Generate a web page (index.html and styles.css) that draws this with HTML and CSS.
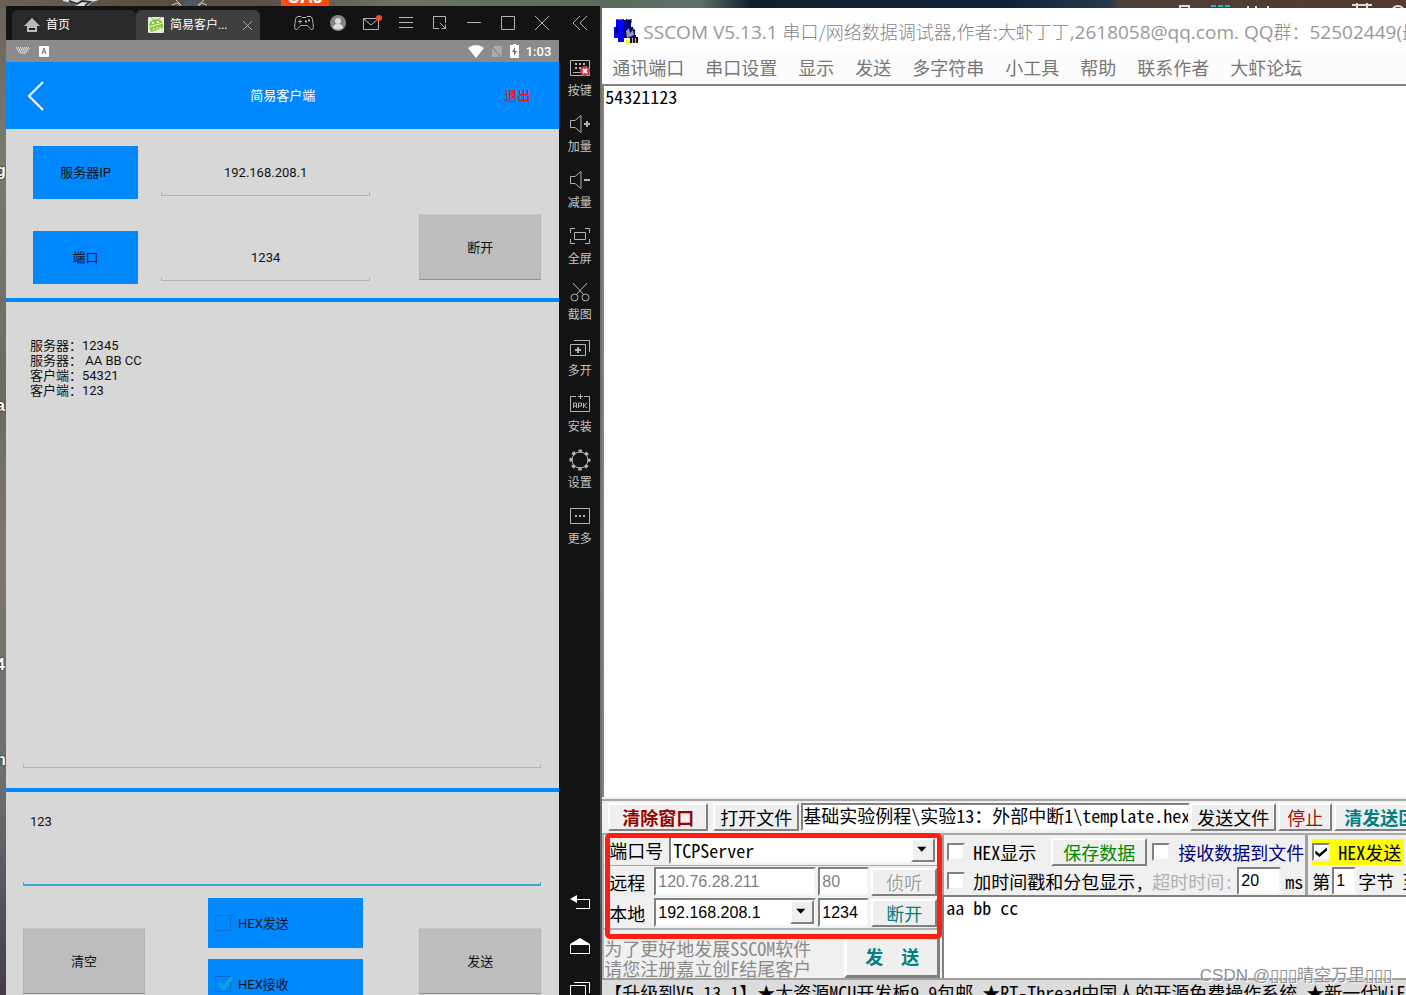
FILE: index.html
```html
<!DOCTYPE html>
<html lang="zh-CN">
<head>
<meta charset="utf-8">
<title>SSCOM V5.13.1</title>
<link rel="stylesheet" href="styles.css">
</head>
<body>
<div class="desktop">
  <div class="wallpaper">
    <svg class="wall-icon wall-a" viewBox="0 0 36 7"><path d="M0 0h36l-7 2-4 4H14L9 3 0 1z" fill="#ddd"/><path d="M6 1l8 3 5-3 8 1-5 4" stroke="#333" stroke-width="2" fill="none"/></svg>
    <svg class="wall-icon wall-b" viewBox="0 0 40 7"><path d="M12 7l3-5 6-2 5 2 4 5z" fill="#4a5a70"/><path d="M2 5l5-2 5 4M37 5l-5-2-5 4M6 0l5 5M34 0l-6 5" stroke="#ccc" fill="none"/></svg>
    <div class="wall-badge">CAJ</div>
    <svg class="wall-icon wall-c" viewBox="0 0 240 8"><path d="M6 8V6h9v2M178 5h20M183 3v5M193 3v5M219 8q5-4 10 0M74 8V6M82 8V6M94 8V6" stroke="#ddd" stroke-width="2" fill="none"/><path d="M37 6h5m2 0h5m2 0h5" stroke="#1ab4c8" stroke-width="2"/></svg>
    <span class="edge edge-g">g</span><span class="edge edge-a">a</span><span class="edge edge-4">4</span><span class="edge edge-n">n</span>
  </div>

  <section class="emulator">
    <div class="phone">
      <header class="tabbar">
        <button class="tab">
          <svg width="16" height="16" viewBox="0 0 16 16"><path d="M8 1L0 9h3v6h10V9h3z" fill="#b8b8b8"/><path d="M5 12h6" stroke="#222" stroke-width="2"/></svg>
          <span>首页</span>
        </button>
        <button class="tab tab-on">
          <svg width="16" height="16" viewBox="0 0 16 16"><rect width="16" height="16" rx="1" fill="#e4ecd8"/><path d="M1 9Q1 3 8 2q6 0 7 5v4L3 15z" fill="#8cc63f"/><path d="M3 0l3 3M13 0l-3 3" stroke="#8cc63f"/><path d="M1 10l14-4" stroke="#f4f8ec"/><circle cx="5" cy="6" r="1" fill="#fff"/><circle cx="10" cy="5" r="1" fill="#fff"/><path d="M5 12h2m1-1h2m1 0h2" stroke="#fff"/></svg>
          <span class="tab-name">简易客户...</span>
          <svg width="9" height="9" viewBox="0 0 9 9"><path d="M0 0l9 9M9 0L0 9" stroke="#aaa" fill="none"/></svg>
        </button>
        <nav class="wintools">
          <button aria-label="手柄"><svg width="20" height="16" viewBox="0 0 20 16"><path d="M4 1.500h3l1 1h4l1-1h3q2 0 2.500 3l1 8q0 2-2 2-1 0-4-4h-7q-3 4-4 4-2 0-2-2l1-8q.5-3 2.500-3zM4 6.500h4M6 4.500v4"/><path d="M11 6.500h2M14 5.500h2" stroke-width="2"/></svg></button>
          <button aria-label="账户"><svg width="16" height="16" viewBox="0 0 16 16"><circle cx="8" cy="8" r="8" fill="#858585" stroke="none"/><circle cx="8" cy="6" r="3" fill="#ddd" stroke="none"/><path d="M3 13q0-4 5-4t5 4q-5 3-10 0z" fill="#ddd" stroke="none"/></svg></button>
          <button aria-label="消息"><svg width="20" height="18" viewBox="0 0 20 18"><path d="M1.500 4.500h15v11h-15zM2 5l7 6 7-6"/><circle cx="17" cy="4" r="3" fill="#ff4632" stroke="none"/></svg></button>
          <button aria-label="菜单"><svg width="14" height="14" viewBox="0 0 14 14"><path d="M0 1.500h14M0 6.500h14M0 11.500h14"/></svg></button>
          <button aria-label="缩放"><svg width="14" height="14" viewBox="0 0 14 14"><path d="M6 12.500H.5V.5h12V7M7 7l5 5M12.500 8.500v4H8.500"/></svg></button>
          <button aria-label="最小化"><svg width="14" height="14" viewBox="0 0 14 14"><path d="M0 6.500h14"/></svg></button>
          <button aria-label="最大化"><svg width="14" height="14" viewBox="0 0 14 14"><path d="M.5.5h13v13H.5z"/></svg></button>
          <button aria-label="关闭"><svg width="14" height="14" viewBox="0 0 14 14"><path d="M0 0l14 14M14 0L0 14"/></svg></button>
        </nav>
      </header>
      <div class="status">
        <svg width="14" height="8" viewBox="0 0 14 8"><path d="M0 .5h14M1 2.500h12M2 4.500h10" stroke="#ddd" stroke-dasharray="1 1"/><path d="M0 1.500h14M1 3.500h12M3 5.500h8M4 6.500h6" stroke="#b8b8b8"/></svg>
        <svg class="status-a" width="10" height="11" viewBox="0 0 10 11"><rect width="10" height="11" rx="1" fill="#fff"/><path d="M3 8l2-6 2 6M4 6h2" stroke="#777" fill="none"/></svg>
        <svg width="16" height="13" viewBox="0 0 16 13"><path d="M8 13L0 3q8-6 16 0z" fill="#fff"/></svg>
        <svg width="12" height="13" viewBox="0 0 12 13"><path d="M3 1h8v11H1V4z" fill="#aaa"/><path d="M0 1l11 12" stroke="#777"/></svg>
        <svg class="status-bat" width="9" height="14" viewBox="0 0 9 14"><path d="M3 0h3v1h3v13H0V1h3z" fill="#fff"/><path d="M5 3L2 8h2v4l3-5H5z" fill="#777"/></svg>
        <span>1:03</span>
      </div>
      <div class="apphead">
        <button class="back" aria-label="返回"><svg width="18" height="30" viewBox="0 0 18 30"><path d="M16 1L2 15l14 14" stroke="#fff" stroke-width="2" fill="none"/></svg></button>
        <h1>简易客户端</h1>
        <button class="quit">退出</button>
      </div>
      <form class="link">
        <label class="tag" for="ip">服务器IP</label>
        <input class="line" id="ip" value="192.168.208.1">
        <label class="tag" for="port">端口</label>
        <input class="line" id="port" value="1234">
        <button type="button" class="grey cut">断开</button>
      </form>
      <div class="log">
        <textarea class="line" aria-label="日志">服务器：12345
服务器： AA BB CC
客户端：54321
客户端：123</textarea>
      </div>
      <div class="compose">
        <textarea class="line line-on" aria-label="发送内容">123</textarea>
        <div class="actions">
          <button class="grey">清空</button>
          <div class="hexes">
            <label><input type="checkbox"><span>HEX发送</span></label>
            <label><input type="checkbox" checked><span>HEX接收</span></label>
          </div>
          <button class="grey">发送</button>
        </div>
      </div>
    </div>

    <aside class="rail">
      <button class="fold" aria-label="收起"><svg width="16" height="16" viewBox="0 0 16 16"><path d="M8 1L1 8l7 7M15 1L8 8l7 7"/></svg></button>
      <div class="tools">
        <button><svg viewBox="0 0 24 24"><path d="M2.500 4.500h19v15h-19zM5 16.500h8"/><path d="M7 8h2m2 0h2m2 0h2M7 12h2m2 0h2" stroke-width="2"/><circle cx="17" cy="15" r="5" fill="#d2383c" stroke="none"/><path d="M15 13l4 4m0-4l-4 4" stroke="#fff" stroke-width="2"/></svg><span>按键</span></button>
        <button><svg viewBox="0 0 24 24"><path d="M2.500 8.500H7l6-5v17l-6-5H2.500z"/><path d="M16 12h6M19 9v6" stroke-width="2"/></svg><span>加量</span></button>
        <button><svg viewBox="0 0 24 24"><path d="M2.500 8.500H7l6-5v17l-6-5H2.500z"/><path d="M16 12h6" stroke-width="2"/></svg><span>减量</span></button>
        <button><svg viewBox="0 0 24 24"><path d="M2.500 9V4.500H7M17 4.500h4.500V9M21.500 15v4.500H17M7 19.500H2.500V15M6.500 8.500h11v7h-11z"/></svg><span>全屏</span></button>
        <button><svg viewBox="0 0 24 24"><path d="M5 3l11 12M19 3L8 15"/><circle cx="6.500" cy="17.500" r="3.500"/><circle cx="17.500" cy="17.500" r="3.500"/></svg><span>截图</span></button>
        <button><svg viewBox="0 0 24 24"><path d="M2.500 8.500h15v11h-15zM6 4.500h15.500V16"/><path d="M7 14h6M10 11v6" stroke-width="2"/></svg><span>多开</span></button>
        <button><svg viewBox="0 0 24 24"><path d="M8 4.500H2.500v15h19v-15H16M12.500 2v5M10 4.500h5M5.500 16v-5h3v5M5.500 14h3M10.500 16v-5h3v3h-3M15.500 11v5M19 11l-3 2.500 3 2.500"/></svg><span>安装</span></button>
        <button><svg viewBox="0 0 24 24"><circle cx="12" cy="12" r="8"/><circle cx="12" cy="12" r="9" stroke-width="3" stroke-dasharray="3.500 3.570" stroke-dashoffset="1.750"/></svg><span>设置</span></button>
        <button><svg viewBox="0 0 24 24"><path d="M2.500 4.500h19v15h-19z"/><path d="M7 12h2m2 0h2m2 0h2" stroke-width="2"/></svg><span>更多</span></button>
      </div>
      <div class="keys">
        <button aria-label="后退"><svg viewBox="0 0 20 16"><path d="M6 5.500h13.500v9H6"/><path d="M0 5l7-4v8z" fill="#fff" stroke="none"/></svg></button>
        <button aria-label="主页"><svg viewBox="0 0 20 16"><path d="M.5 6.500h19v9H.5z"/><path d="M0 6l10-6 10 6z" fill="#fff" stroke="none"/></svg></button>
        <button aria-label="最近"><svg viewBox="0 0 20 16"><path d="M.5 3.500h15v12H.5zM4 .5h15.500V11"/></svg></button>
      </div>
    </aside>
  </section>

  <section class="sscom">
    <header class="title">
      <svg width="24" height="24" viewBox="0 0 24 24"><path d="M2 1h8v22H4v-4H0V8h2z" fill="#00f"/><path d="M10 1h7v7h2v3h2v5h1v3H10z" fill="#000080"/><path d="M3 1V0h6l2 2 2-2h4v4M3 8v8M18 8l3 4" stroke="#000" fill="none"/><path d="M12 12l3-3 1 5 3-3 1 5-7 3z" fill="#99a"/><path d="M16 18h8v6h-8z" fill="#111"/><path d="M18.500 19v5M21.500 19v5" stroke="#bbb"/><path d="M11 22l2-2 3 2v2h-5z" fill="#ff0"/></svg>
      <h2><span>SSCOM V5.13.1 </span>串口/网络数据调试器<span>,</span>作者<span>:</span>大虾丁丁<span>,2618058@qq.com. QQ</span>群：<span>52502449(</span>最新版本</h2>
    </header>
    <nav class="menu">
      <a href="#">通讯端口</a><a href="#">串口设置</a><a href="#">显示</a><a href="#">发送</a><a href="#">多字符串</a><a href="#">小工具</a><a href="#">帮助</a><a href="#">联系作者</a><a href="#">大虾论坛</a>
    </nav>
    <textarea class="receive" aria-label="接收窗口">54321123</textarea>
    <div class="filebar">
      <button class="bevel w-clear">清除窗口</button>
      <button class="bevel w-open">打开文件</button>
      <input class="sunk w-path" aria-label="文件路径" value="基础实验例程\实验13：外部中断1\template.hex">
      <button class="bevel w-file">发送文件</button>
      <button class="bevel w-stop">停止</button>
      <button class="bevel w-wipe">清发送区</button>
    </div>
    <div class="controls">
      <div class="left">
        <div class="conn">
          <div class="row row-port">
            <label for="com">端口号</label>
            <div class="combo"><select id="com"><option>TCPServer</option></select><svg viewBox="0 0 24 24"><path d="M5 8h11l-5.500 6z"/></svg></div>
          </div>
          <div class="row">
            <label for="remote">远程</label>
            <input class="sunk dim host" id="remote" value="120.76.28.211">
            <input class="sunk dim num" aria-label="远程端口" value="80">
            <button class="bevel off">侦听</button>
          </div>
          <div class="row">
            <label for="local">本地</label>
            <div class="combo host"><select id="local" class="sans"><option>192.168.208.1</option></select><svg viewBox="0 0 24 24"><path d="M5 8h11l-5.500 6z"/></svg></div>
            <input class="sunk num" aria-label="本地端口" value="1234">
            <button class="bevel teal">断开</button>
          </div>
          <div class="marker"></div>
        </div>
        <div class="promo">
          <p>为了更好地发展SSCOM软件<br>请您注册嘉立创F结尾客户</p>
          <button class="bevel send">发　送</button>
        </div>
      </div>
      <div class="right">
        <div class="opts">
          <div class="opts-a">
            <div class="orow">
              <label class="chk"><input type="checkbox">HEX显示</label>
              <button class="bevel save">保存数据</button>
              <label class="chk navy"><input type="checkbox">接收数据到文件</label>
            </div>
            <div class="orow">
              <label class="chk"><input type="checkbox">加时间戳和分包显示,</label>
              <label class="faint" for="ms">超时时间:</label>
              <input class="sunk ms" id="ms" value="20"><span>ms</span>
            </div>
          </div>
          <div class="opts-b">
            <div class="orow"><label class="chk hot"><input type="checkbox" checked>HEX发送</label></div>
            <div class="orow"><label for="nth">第</label><input class="sunk nth" id="nth" value="1"><span>字节</span><span class="to">至</span></div>
          </div>
        </div>
        <textarea class="sendbox" aria-label="发送窗口">aa bb cc</textarea>
      </div>
    </div>
    <div class="ticker">【升级到V5.13.1】★大资源MCU开发板9.9包邮 ★RT-Thread中国人的开源免费操作系统 ★新一代WiFi芯片</div>
    <div class="watermark">CSDN @▯▯▯晴空万里▯▯▯</div>
  </section>
</div>
</body>
</html>
```
FILE: styles.css
```css
* { box-sizing: border-box; }
body { margin: 0; overflow: hidden; }
h1, h2, p { margin: 0; font-weight: normal; }
button, input, select, textarea { font: inherit; color: inherit; margin: 0; padding: 0; border: 0; border-radius: 0; background: none; outline: none; }
textarea { resize: none; display: block; overflow: hidden; }
a { color: inherit; text-decoration: none; }
svg { flex: none; }

.desktop {
  position: relative;
  height: 100vh;
  display: grid;
  grid-template-columns: 42.45% minmax(0, 1fr);
  column-gap: 2px;
  padding: 6px 0 0 6px;
  background: #4c4a46;
}
.wallpaper {
  position: absolute;
  inset: 0;
  overflow: hidden;
  background:
    linear-gradient(90deg, #6b6256 0, #57503f 140px, #5c504a 270px, #6d7168 400px, #5a6a5e 610px, #5f7068 700px, #10202f 750px, #0d2238 1000px, #24394a 1110px, #4d4038 1120px, #54392f 1406px) top / 100% 8px no-repeat,
    linear-gradient(#6b6256, #777a72 15%, #6c6a64 40%, #7d776a 55%, #6a6d70 80%, #453c4a);
}
.wall-icon { position: absolute; top: 0; }
.wall-a { left: 63px; width: 36px; height: 7px; }
.wall-b { left: 170px; width: 40px; height: 7px; }
.wall-c { left: 1174px; width: 240px; height: 8px; }
.wall-badge { position: absolute; left: 281px; top: 0; width: 48px; height: 6px; background: #ff4d0c; color: #fff; font: bold 18px/1 "Liberation Sans", sans-serif; display: flex; align-items: flex-end; justify-content: center; overflow: hidden; }
.edge { position: absolute; left: -4px; font: bold 16px/20px "Liberation Sans", sans-serif; color: #fff; text-shadow: 0 0 2px #000; }
.edge-g { top: 161px; }
.edge-a { top: 396px; }
.edge-4 { top: 655px; }
.edge-n { top: 750px; }

/* emulator */
.emulator { position: relative; display: flex; min-height: 0; overflow: hidden; background: #131313; font: 13px/15px Roboto, "Noto Sans CJK SC", sans-serif; color: #111; }
.phone { flex: 1; min-width: 0; display: flex; flex-direction: column; background: #d7d7d7; }
.tabbar { flex: none; height: 34px; display: flex; align-items: center; padding-left: 6px; background: #131313; }
.tab { width: 124px; height: 30px; display: flex; align-items: center; gap: 6px; padding: 0 8px 0 12px; border-radius: 6px 6px 0 0; background: #2a2a2a; color: #fff; font-size: 12px; align-self: flex-end; }
.tab-on { background: #3f3f3f; }
.tab-name { flex: 1; text-align: left; white-space: nowrap; }
.wintools { margin-left: auto; display: flex; }
.wintools button { width: 34px; height: 34px; display: grid; place-items: center; }
.wintools svg, .fold svg, .tools svg { fill: none; stroke: #b4b4b4; }
.status { flex: none; height: 22px; display: flex; align-items: center; gap: 7px; padding: 0 8px 0 10px; background: #8b8b8b; color: #fff; font-weight: 500; }
.status-a { margin: 0 auto 0 2px; }
.apphead { flex: none; height: 67px; display: grid; grid-template-columns: 80px 1fr 80px; align-items: center; background: #08f; color: #fff; }
.apphead h1 { font-size: 13px; line-height: 18px; text-align: center; }
.back { justify-self: start; padding-left: 21px; height: 30px; }
.quit { color: #e01020; justify-self: end; padding-right: 29px; }
.link { flex: none; display: grid; grid-template-columns: 105px minmax(0, 1fr) 148px; grid-template-rows: 53px 53px; gap: 32px 23px; padding: 17px 18px 14px 27px; }
.tag { background: #08f; display: grid; place-items: center; }
.line {
  --c: #b2b2b2;
  --w: 1px;
  width: 100%;
  background:
    linear-gradient(var(--c), var(--c)) bottom / 100% var(--w) no-repeat,
    linear-gradient(var(--c), var(--c)) left bottom / 1px 4px no-repeat,
    linear-gradient(var(--c), var(--c)) right bottom / 1px 4px no-repeat;
}
.link .line { height: 50px; padding-top: 2px; text-align: center; }
.line-on { --c: #3fa9d0; --w: 2px; }
.grey { width: 122px; height: 66px; background: #bdbdbd; border: 1px solid #b2b2b2; border-bottom-color: #8f8f8f; border-top-color: #c8c8c8; }
.cut { grid-column: 3; grid-row: 1 / 3; justify-self: end; align-self: end; margin-bottom: 4px; }
.log { flex: 1; min-height: 0; padding: 16px 18px 20px 17px; border: solid #08f; border-width: 4px 0; }
.log .line { height: 100%; padding: 20px 7px; }
.compose { flex: none; height: 203px; padding: 12px 18px 0 17px; overflow: hidden; }
.compose .line { height: 82px; padding: 10px 7px; }
.actions { display: grid; grid-template-columns: 185px minmax(155px, 1fr) 122px; padding-top: 12px; }
.actions .grey { margin-top: 30px; }
.hexes { display: grid; gap: 11px; width: 155px; }
.hexes label { height: 50px; display: flex; align-items: center; gap: 7px; padding-left: 7px; background: #08f; }
.hexes input { appearance: none; width: 16px; height: 16px; border: 1px solid #0a6ccc; display: grid; }
.hexes input:checked::after { content: ""; width: 17px; height: 14px; background: #12a3d8; clip-path: polygon(10% 50%, 28% 40%, 42% 65%, 85% 0, 100% 10%, 45% 100%); }

.rail { width: 41px; flex: none; display: flex; flex-direction: column; color: #c4c4c4; font-size: 12px; }
.fold { height: 34px; display: grid; place-items: center; }
.tools { display: grid; margin-top: 16px; }
.tools button { display: grid; justify-items: center; height: 56px; grid-template-rows: 24px 22px; line-height: 22px; }
.tools svg { width: 24px; height: 24px; }
.keys { margin: auto 0 -17px; display: grid; }
.keys button { height: 44px; display: grid; place-items: center; }
.keys svg { width: 20px; height: 16px; fill: none; stroke: #fff; }

/* serial tool */
.sscom { position: relative; margin-top: 2px; min-height: 0; min-width: 0; overflow: hidden; display: flex; flex-direction: column; background: #f0f0f0; color: #000; white-space: nowrap; font: 18px/20px "Noto Sans Mono CJK SC", "Noto Sans CJK SC", sans-serif; }
.title { flex: none; height: 46px; display: flex; align-items: center; gap: 5px; padding-left: 12px; background: #fff; color: #858585; }
.title h2 { font: 300 18px/24px "Noto Sans CJK SC", sans-serif; }
.title span { font: 19px/24px "Open Sans", sans-serif; color: #999; }
.menu { flex: none; height: 30px; display: flex; align-items: center; gap: 21px; padding: 0 0 4px 10px; background: #fcfcfc; color: #777; }
.receive { flex: 1; min-height: 0; width: 100%; padding: 0 1px; background: #fff; border: solid #828282; border-width: 2px 0 0 2px; }
.filebar { flex: none; height: 36px; display: flex; align-items: center; border: solid #a8a8a8; border-width: 2px 0; padding-left: 6px; margin-top: 2px; }
.bevel { flex: none; height: 28px; background: #efefef; border: 2px solid; border-color: #fff #808080 #808080 #fff; display: grid; place-content: center; }
.sunk { flex: none; background: #fff; border: 2px solid; border-color: #808080 #f4f4f4 #f4f4f4 #808080; }
.w-clear { width: 100px; color: #900; font-weight: bold; margin-right: 5px; }
.w-open { width: 86px; margin-right: 2px; }
.w-path { width: 389px; height: 28px; padding-bottom: 4px; }
.w-file { width: 86px; margin-right: 2px; }
.w-stop { width: 54px; color: #a01010; margin-right: 2px; }
.w-wipe { width: 92px; color: #008080; font-weight: bold; }
.controls { flex: none; display: grid; grid-template-columns: 340px minmax(0, 1fr); height: 143px; }
.left { display: flex; flex-direction: column; border-left: 2px solid #b0b0b0; }
.conn { position: relative; border-bottom: 2px solid #b0b0b0; }
.marker { position: absolute; left: 1px; right: 0; top: -2px; bottom: -11px; border: 5px solid #ff1e10; border-radius: 5px; pointer-events: none; z-index: 2; }
.row { height: 31px; display: flex; align-items: center; gap: 2px; padding: 0 5px; }
.row label { width: 43px; flex: none; }
.row-port { border-bottom: 1px solid #a8a8a8; }
.row-port label { width: 58px; }
.combo { position: relative; flex: 1; height: 28px; display: flex; background: #fff; border: 2px solid; border-color: #808080 #f4f4f4 #f4f4f4 #808080; }
.combo select { appearance: none; flex: 1; width: 100%; padding-left: 2px; }
.combo svg { position: absolute; right: 0; top: 0; width: 24px; height: 24px; background: #efefef; border: 2px solid; border-color: #fff #808080 #808080 #fff; pointer-events: none; }
.host { flex: 1; min-width: 0; height: 29px; padding-left: 2px; }
.combo.host { padding-left: 0; }
.num { width: 51px; height: 29px; padding-left: 2px; }
.num, .ms, .nth, .host, .combo .sans { font-family: "Liberation Sans", sans-serif; font-size: 16px; }
.row .bevel { width: 66px; }
.dim { color: #808080; }
.off { color: #a0a0a0; text-shadow: 1px 1px #fff; }
.teal { color: #008080; }
.promo { flex: 1; display: flex; justify-content: space-between; align-items: flex-end; color: #8a8a8a; padding-right: 2px; }
.send { width: 96px; height: 44px; color: #008080; font-weight: bold; border-width: 3px; }
.right { display: flex; flex-direction: column; min-width: 0; overflow: hidden; }
.opts { display: grid; grid-template-columns: 366px minmax(0, 1fr); height: 60px; }
.opts-a { border-right: 3px solid #a0a0a0; border-left: 2px solid #a0a0a0; padding: 2px 2px 0 3px; }
.opts-b { padding: 2px 0 0 4px; overflow: hidden; }
.orow { height: 30px; display: flex; align-items: center; }
.orow + .orow { height: 28px; gap: 4px; }
.opts-b .orow + .orow { gap: 2px; }
.chk { display: flex; align-items: center; gap: 8px; }
.chk input { appearance: none; width: 18px; height: 18px; background: #fff; border: 2px solid; border-color: #808080 #eee #eee #808080; display: grid; place-items: center; }
.chk input:checked::after { content: ""; width: 12px; height: 10px; background: #000; clip-path: polygon(0 35%, 35% 68%, 100% 0, 100% 32%, 35% 100%, 0 68%); }
.save { width: 96px; color: #008a00; margin: 0 5px 0 15px; }
.navy { color: #000080; }
.faint { color: #b0b0b0; margin-left: 4px; }
.hot { background: #ff0; padding-right: 3px; height: 26px; }
.ms { width: 44px; height: 28px; padding-left: 2px; }
.nth { width: 24px; height: 28px; padding-left: 2px; }
.to { margin-left: 6px; }
.sendbox { flex: 1; min-height: 0; width: 100%; background: #fff; border: solid #808080; border-width: 2px 0 0 2px; padding: 0 2px; }
.ticker { flex: none; height: 17px; overflow: hidden; border-top: 2px solid #a0a0a0; background: #dcdcdc; padding-left: 2px; line-height: 24px; }
.watermark { position: absolute; right: 14px; bottom: 7px; color: #909090; font: 17px/24px "Liberation Sans", "Noto Sans CJK SC", sans-serif; text-shadow: 1px 1px #fff; }
```
